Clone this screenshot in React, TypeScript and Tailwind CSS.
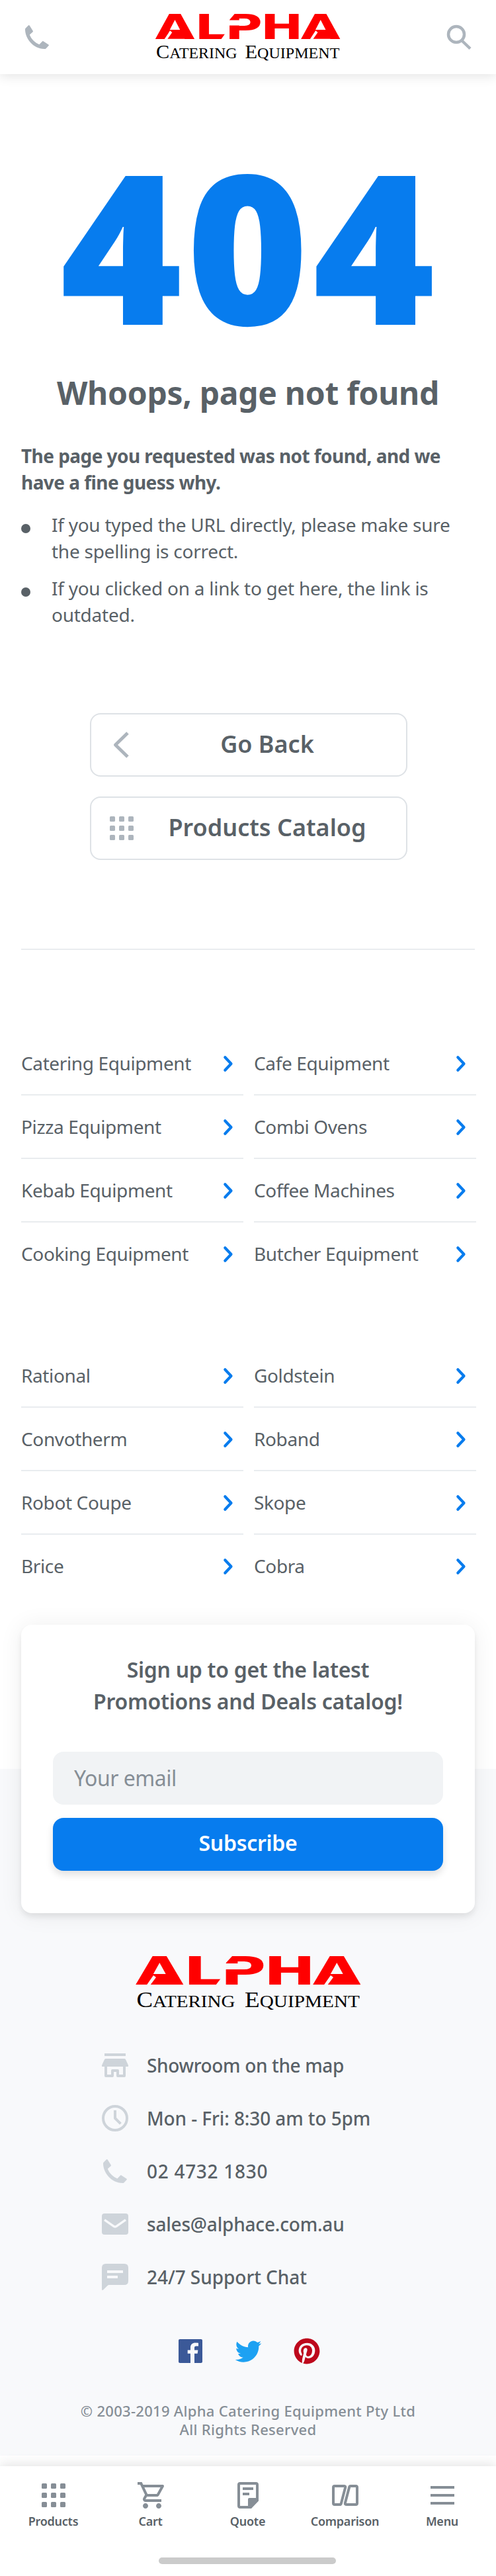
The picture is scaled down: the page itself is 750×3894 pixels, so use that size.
import React from "react";
import { IoLogoFacebook, IoLogoTwitter } from "react-icons/io";
import { FaPinterest } from "react-icons/fa";
import { MdOutlineShoppingCart } from "react-icons/md";

/* The current text colour is the colour of the surface behind the logo; the slits use it. */
function Logo({ className }: { className: string }) {
  return (
    <svg viewBox="0 0 342 82" preserveAspectRatio="none" className={`overflow-visible ${className}`} role="img">
      <text transform="scale(1.6 1)" x="0.4 45.8 80.6 121.6 168" y="44" fill="#ff0000" className="font-['DejaVu_Sans'] text-[59px] font-bold">
        ALPHA
      </text>
      {[0, 268].map((x) => (
        <g key={x} transform={`translate(${x} 0)`}>
          <path d="M17 44 24 33H58L60 44Z" fill="#ff0000" />
          <path d="M17.500 45H23L32 33L28 30Z" fill="currentColor" />
        </g>
      ))}
      <path d="M132 32V45H122ZM136 0H148L136 13ZM136 12H160V21H136Z" fill="currentColor" />
      <g fill="#000" className="font-['Liberation_Serif'] text-[26px]">
        <text x="2.5" y="78" textLength="149" lengthAdjust="spacingAndGlyphs">
          <tspan className="text-[33px]">C</tspan>ATERING
        </text>
        <text x="166" y="78" textLength="174" lengthAdjust="spacingAndGlyphs">
          <tspan className="text-[33px]">E</tspan>QUIPMENT
        </text>
      </g>
    </svg>
  );
}

function Icon({ children, className = "" }: { children: React.ReactNode; className?: string }) {
  return (
    <svg viewBox="0 0 24 24" fill="currentColor" className={`size-12 shrink-0 ${className}`}>
      {children}
    </svg>
  );
}

const PhoneIcon = ({ className }: { className?: string }) => (
  <Icon className={className}>
    <path d="M3.3 5.4 5.4 3.2Q5.9 2.8 6.3 3.3L8.9 7.4Q9.1 7.8 8.8 8.1L6.4 10.3C7.6 13.5 10.4 16.4 13.7 17.6L16 15.2Q16.3 14.9 16.7 15.1L20.7 17.7Q21.2 18 20.8 18.5L18.7 20.7Q18.4 21 17.5 21C9 21 3 13 3 6.3Q3 5.7 3.3 5.4Z" />
  </Icon>
);

const GridIcon = ({ className }: { className?: string }) => (
  <Icon className={className}>
    {[3, 10, 17].map((y) => [3, 10, 17].map((x) => <rect key={`${x}-${y}`} x={x} y={y} width="4" height="4" rx="0.8" />))}
  </Icon>
);

const StoreIcon = () => (
  <Icon>
    <path d="M4 3h16v2H4zM5 7h14q.7 0 1 .6l2 4.4v.6q0 .4-.5.4h-19q-.5 0-.5-.4V12l2-4.4Q4.300 7 5 7Z" />
    <path d="M5 12.500V20h5v-4h4v4h5v-7.500" fill="none" stroke="currentColor" strokeWidth="2" strokeLinejoin="round" />
  </Icon>
);

const ClockIcon = () => (
  <Icon>
    <g fill="none" stroke="currentColor" strokeWidth="2">
      <circle cx="12" cy="12" r="9" />
      <path d="M12 6v6l4.200 4.200" strokeLinejoin="round" />
    </g>
  </Icon>
);

const MailIcon = () => (
  <Icon>
    <rect x="2" y="4" width="20" height="16" rx="2" />
    <path d="M4 8.800l7 4.900q1 .7 2 0l7-4.900" fill="none" stroke="#f8f9fb" strokeWidth="1.700" />
  </Icon>
);

const ChatIcon = () => (
  <Icon>
    <path d="M5 2h14q3 0 3 3v10q0 3-3 3H7.500Q6.800 18 6.200 18.600L3 21.800Q2 22.300 2 21.500V5Q2 2 5 2Z" />
    <path d="M6 7h12v2H6zM6 11h8v2H6z" fill="#f8f9fb" />
  </Icon>
);

const QuoteIcon = () => (
  <Icon>
    <path d="M13.500 21H6q-1 0-1-1V4q0-1 1-1h12q1 0 1 1v11.500z" fill="none" stroke="currentColor" strokeWidth="2" />
    <path d="M8 6h8v2H8zM8 10h5v2H8zM13 14h7v2.200L14.500 22H12v-7q0-1 1-1Z" />
  </Icon>
);

const CompareIcon = () => (
  <Icon>
    <g fill="none" stroke="currentColor" strokeWidth="2">
      <path d="M4 5H11Q12.300 5 12.100 6L8.900 18.200Q8.700 19 7.900 19H4Q3 19 3 18V6Q3 5 4 5Z" />
      <path transform="rotate(180 12 12)" d="M4 5H11Q12.300 5 12.100 6L8.900 18.200Q8.700 19 7.900 19H4Q3 19 3 18V6Q3 5 4 5Z" />
    </g>
  </Icon>
);

const MenuIcon = () => (
  <Icon>
    <path d="M3 5h18v2H3zM3 11h18v2H3zM3 17h18v2H3z" />
  </Icon>
);

function LinkGrid({ items }: { items: string[] }) {
  return (
    <ul className="grid grid-cols-2 gap-x-4 pl-8 pr-[30px]">
      {items.map((item, i) => (
        <li
          key={item}
          className={`flex h-24 items-center justify-between border-b-2 pr-4 text-[28px] tracking-[-0.38px] ${i < items.length - 2 ? "border-[#e9ecef]" : "border-transparent"}`}
        >
          {item}
          <svg viewBox="0 0 14 24" className="mt-0.5 h-6 w-3.5 shrink-0 overflow-visible" fill="none" stroke="#077cee" strokeWidth="4.2" strokeLinecap="round">
            <path d="M2.300 2.300 11.500 12 2.300 21.700" strokeLinejoin="round" />
          </svg>
        </li>
      ))}
    </ul>
  );
}

const contacts = [
  { icon: <StoreIcon />, label: "Showroom on the map", tracking: "tracking-[-0.36px]" },
  { icon: <ClockIcon />, label: "Mon - Fri: 8:30 am to 5pm", tracking: "tracking-[-0.1px]" },
  { icon: <PhoneIcon />, label: "02 4732 1830", tracking: "tracking-[0.7px]" },
  { icon: <MailIcon />, label: "sales@alphace.com.au", tracking: "tracking-[-0.2px]" },
  { icon: <ChatIcon />, label: "24/7 Support Chat", tracking: "tracking-[-0.05px]" },
];

const tabs = [
  { icon: <GridIcon />, label: "Products" },
  { icon: <MdOutlineShoppingCart className="size-12 translate-x-0.5" />, label: "Cart" },
  { icon: <QuoteIcon />, label: "Quote" },
  { icon: <CompareIcon />, label: "Comparison" },
  { icon: <MenuIcon />, label: "Menu" },
];

export default function App() {
  return (
    <div className="flex w-[750px] flex-col bg-white font-['Noto_Sans',sans-serif] text-[#596167]">
      <header className="relative z-10 flex h-28 items-center justify-between bg-white px-8 text-[#adb5bd] shadow-[0_4px_16px_rgba(0,0,0,0.1)]">
        <PhoneIcon />
        <Logo className="ml-[-3px] h-[72px] w-[281px] text-white" />
        <svg viewBox="0 0 48 48" className="mr-[-2px] size-12" fill="none" stroke="currentColor" strokeWidth="4.500">
          <circle cx="18" cy="20" r="12" />
          <path d="M26.500 29.500 39 41.500" />
        </svg>
      </header>

      <main className="flex flex-col">
        <div className="pt-[107px] pl-[5px] text-center text-[315px] leading-[300px] font-black tracking-[6.5px] text-[#077cee]">404</div>
        <h1 className="mt-[45px] text-center text-[48px] leading-[60px] font-bold tracking-[-0.3px]">Whoops, page not found</h1>
        <p className="mt-[45px] px-8 text-[28px] leading-10 font-bold tracking-[-0.55px]">
          The page you requested was not found, and we
          <br />
          have a fine guess why.
        </p>
        <ul className="mt-6 flex flex-col gap-4 px-8 text-[28px] leading-10 tracking-[-0.25px]">
          <li className="flex gap-8">
            <span className="mt-[19px] size-3.5 shrink-0 rounded-full bg-[#596167]" />
            <span>
              If you typed the URL directly, please make sure
              <br />
              the spelling is correct.
            </span>
          </li>
          <li className="flex gap-8">
            <span className="mt-[19px] size-3.5 shrink-0 rounded-full bg-[#596167]" />
            <span>
              If you clicked on a link to get here, the link is
              <br />
              outdated.
            </span>
          </li>
        </ul>

        <div className="mt-[129px] flex flex-col items-center gap-[30px] pl-0.5 text-[36px] font-semibold">
          <button className="flex h-24 w-[480px] items-center rounded-2xl border-2 border-[#dee2e6] pl-[22px] pr-8">
            <svg viewBox="0 0 48 48" className="size-12 shrink-0" fill="none" stroke="#adb5bd" strokeWidth="5">
              <path d="M33 6 14.500 24 33 42" strokeLinejoin="round" />
            </svg>
            <span className="flex-1 pb-[3px] pl-[18px] text-center">Go Back</span>
          </button>
          <button className="flex h-24 w-[480px] items-center rounded-2xl border-2 border-[#dee2e6] pl-[22px] pr-8">
            <GridIcon className="text-[#adb5bd]" />
            <span className="flex-1 pb-[3px] pl-[18px] text-center whitespace-nowrap">Products Catalog</span>
          </button>
        </div>

        <hr className="mx-8 mt-[134px] border-t-2 border-[#e9ecef]" />
        <div className="mt-[124px]">
          <LinkGrid items={["Catering Equipment", "Cafe Equipment", "Pizza Equipment", "Combi Ovens", "Kebab Equipment", "Coffee Machines", "Cooking Equipment", "Butcher Equipment"]} />
        </div>
        <div className="mt-[88px]">
          <LinkGrid items={["Rational", "Goldstein", "Convotherm", "Roband", "Robot Coupe", "Skope", "Brice", "Cobra"]} />
        </div>
      </main>

      <section className="mt-10 bg-[linear-gradient(#fff_50%,#f8f9fb_50%)] px-8">
        <div className="relative flex h-[436px] flex-col rounded-2xl bg-white px-12 pt-11 shadow-[0_6px_8px_rgba(0,0,0,0.07),0_2px_36px_rgba(0,0,0,0.07)]">
          <h2 className="text-center text-[32px] leading-[48px] font-semibold">
            <span className="tracking-[-0.3px]">Sign up to get the latest</span>
            <br />
            <span className="tracking-[-0.25px]">Promotions and Deals catalog!</span>
          </h2>
          <div className="mt-[52px] flex h-20 items-center rounded-2xl bg-[#f1f3f5] px-8 text-[32px] tracking-[-0.48px] text-[#868e96]">Your email</div>
          <button className="mt-5 h-20 rounded-2xl bg-[#077cee] pb-[5px] text-[32px] font-semibold tracking-[-0.3px] text-white shadow-[0_6px_12px_rgba(0,0,0,0.12)]">Subscribe</button>
        </div>
      </section>

      <footer className="bg-[#f8f9fb] pt-16 pb-[26px]">
        <Logo className="ml-[204px] block h-[82px] w-[342px] text-[#f8f9fb]" />
        <ul className="mt-11 ml-[150px]">
          {contacts.map((c) => (
            <li key={c.label} className="flex h-20 items-center gap-[24px] text-[#ced4da]">
              {c.icon}
              <span className={`text-[28px] font-medium text-[#596167] ${c.tracking}`}>{c.label}</span>
            </li>
          ))}
        </ul>
        <div className="mt-12 ml-[264px] flex h-12 items-center">
          <IoLogoFacebook className="size-12 text-[#3b5998]" />
          <IoLogoTwitter className="ml-[42px] size-[43px] text-[#1da1f2]" />
          <FaPinterest className="ml-[47px] size-10 text-[#bd081c]" />
        </div>
        <div className="mt-[52px] text-center text-[22px] leading-7 font-medium tracking-[0.3px] text-[#868e96]">
          © 2003-2019 Alpha Catering Equipment Pty Ltd
          <br />
          All Rights Reserved
        </div>
      </footer>

      <nav className="relative mt-4 flex h-[166px] flex-col bg-white pt-5 shadow-[0_-4px_16px_rgba(0,0,0,0.1)]">
        <div className="grid grid-cols-5 pr-2 pl-[7px]">
          {tabs.map((t) => (
            <div key={t.label} className="flex flex-col items-center text-[#868e96]">
              {t.icon}
              <span className="mt-1 text-[18px] leading-[22px] font-semibold tracking-[-0.25px] text-[#596167]">{t.label}</span>
            </div>
          ))}
        </div>
        <div className="mt-11 ml-[240px] h-2.5 w-[268px] rounded-full bg-[#cbcbcb]" />
      </nav>
    </div>
  );
}
